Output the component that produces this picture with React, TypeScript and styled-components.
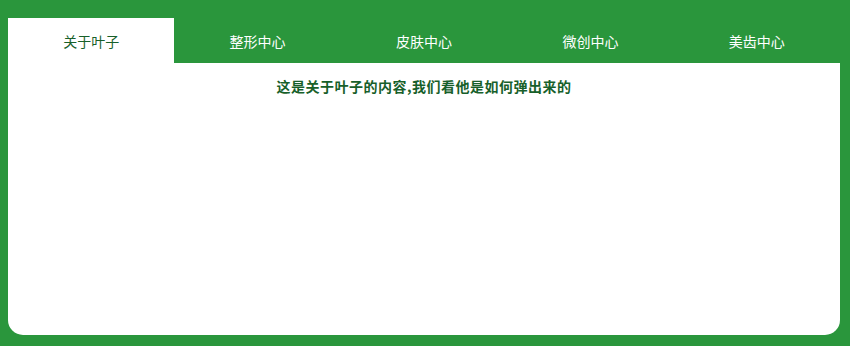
import React, { FunctionComponent, useState } from 'react';
import styled, { createGlobalStyle } from 'styled-components';

const GlobalStyle = createGlobalStyle`
    html, body {
        margin: 0;
        padding: 0;
        background: #2a963c;
    }
    body {
        font-family: "Noto Sans CJK SC", "Noto Sans", sans-serif;
    }
`;

const Page = styled.div`
    width: 850px;
    height: 346px;
    box-sizing: border-box;
    padding: 18px 10px 11px 8px;
    background: #2a963c;
`;

const Panel = styled.div`
    display: flex;
    flex-direction: column;
    height: 100%;
    background: #ffffff;
    border-radius: 0 0 15px 15px;
    overflow: hidden;
`;

const TabBar = styled.ul`
    display: flex;
    margin: 0;
    padding: 0;
    list-style: none;
    height: 45px;
    background: #2a963c;
`;

const Tab = styled.li<{ $active: boolean }>`
    flex: 1;
    display: flex;
    align-items: center;
    justify-content: center;
    font-size: 14px;
    cursor: pointer;
    color: ${(p) => (p.$active ? '#17602a' : '#ffffff')};
    background: ${(p) => (p.$active ? '#ffffff' : 'transparent')};
`;

const Content = styled.div`
    flex: 1;
    padding-top: 13px;
    text-align: center;
    font-size: 14px;
    font-weight: bold;
    letter-spacing: 0.5px;
    line-height: 20px;
    color: #17602a;
`;

const tabs = [
    { title: '关于叶子', body: '这是关于叶子的内容,我们看他是如何弹出来的' },
    { title: '整形中心', body: '这是关于整形中心的内容,我们看他是如何弹出来的' },
    { title: '皮肤中心', body: '这是关于皮肤中心的内容,我们看他是如何弹出来的' },
    { title: '微创中心', body: '这是关于微创中心的内容,我们看他是如何弹出来的' },
    { title: '美齿中心', body: '这是关于美齿中心的内容,我们看他是如何弹出来的' },
];

const App: FunctionComponent = () => {
    const [current, setCurrent] = useState<number>(0);

    return (
        <Page>
            <GlobalStyle />
            <Panel>
                <TabBar>
                    {tabs.map((tab, i) => (
                        <Tab key={tab.title} $active={i === current} onMouseEnter={() => setCurrent(i)}>
                            {tab.title}
                        </Tab>
                    ))}
                </TabBar>
                <Content>{tabs[current].body}</Content>
            </Panel>
        </Page>
    );
};

export default App;
